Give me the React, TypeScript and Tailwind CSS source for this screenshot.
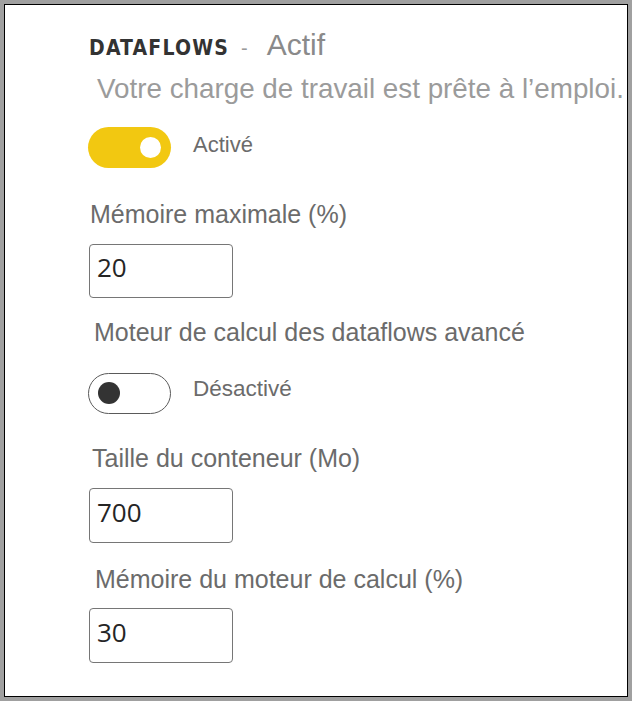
import React from 'react';

const sans = "font-['Liberation_Sans',Arial,sans-serif]";

const Toggle: React.FC<{ on: boolean }> = ({ on }) => {
    if (on) {
        return (
            <div className="w-[83px] h-[41px] rounded-full bg-[#f2c811] flex items-center justify-end pr-[10px] shrink-0">
                <div className="w-[21px] h-[21px] rounded-full bg-white" />
            </div>
        );
    }
    return (
        <div className="w-[83px] h-[41px] rounded-full border-[1.5px] border-[#5a5a5a] bg-white flex items-center pl-[8.5px] shrink-0">
            <div className="w-[22px] h-[22px] rounded-full bg-[#333333]" />
        </div>
    );
};

const NumberBox: React.FC<{ value: string; className?: string }> = ({ value, className = '' }) => (
    <div
        className={`w-[144px] rounded-[4px] border-[1.5px] border-[#767676] bg-white flex items-center pl-[7px] pb-[7px] text-[26px] leading-none text-[#252525] font-['Open_Sans','Noto_Sans',sans-serif] ${className}`}
    >
        {value}
    </div>
);

export default function App() {
    return (
        <div className="w-[632px] h-[701px] bg-[#a0a0a0] p-1">
            <div className={`h-full bg-white border border-black pl-[83px] pt-[25px] flex flex-col items-start ${sans}`}>
                {/* Header */}
                <div className="flex items-baseline leading-none">
                    <span className="ml-[1px] text-[21px] font-bold text-[#333333] font-['DejaVu_Sans_Condensed','DejaVu_Sans',sans-serif] tracking-[1.2px]">
                        DATAFLOWS
                    </span>
                    <span className="ml-[12px] text-[20px] text-[#9a9a9a]">-</span>
                    <span className="ml-[19px] text-[30px] text-[#8a8a8a]">Actif</span>
                </div>
                <p className="mt-[15px] ml-[9px] text-[27.8px] leading-none text-[#9b9b9b] whitespace-nowrap">
                    Votre charge de travail est prête à l’emploi.
                </p>

                {/* Dataflows on/off */}
                <div className="mt-[24px] flex items-start">
                    <Toggle on />
                    <span className="ml-[22px] mt-[7px] text-[22px] leading-none text-[#6b6b6b]">Activé</span>
                </div>

                <label className="mt-[34px] ml-[2px] text-[25px] leading-none text-[#6b6b6b]">Mémoire maximale (%)</label>
                <NumberBox value="20" className="mt-[17px] ml-[1px] h-[54px]" />

                <label className="mt-[22px] ml-[6px] text-[25px] leading-none text-[#6b6b6b]">
                    Moteur de calcul des dataflows avancé
                </label>

                {/* Enhanced compute engine */}
                <div className="mt-[28px] flex items-start">
                    <Toggle on={false} />
                    <span className="ml-[22px] mt-[5px] text-[22.5px] leading-none text-[#6b6b6b]">Désactivé</span>
                </div>

                <label className="mt-[32px] ml-[4px] text-[25px] leading-none text-[#6b6b6b]">Taille du conteneur (Mo)</label>
                <NumberBox value="700" className="mt-[17px] ml-[1px] h-[55px]" />

                <label className="mt-[24px] ml-[7px] text-[25px] leading-none text-[#6b6b6b]">
                    Mémoire du moteur de calcul (%)
                </label>
                <NumberBox value="30" className="mt-[16px] ml-[1px] h-[55px]" />
            </div>
        </div>
    );
}
